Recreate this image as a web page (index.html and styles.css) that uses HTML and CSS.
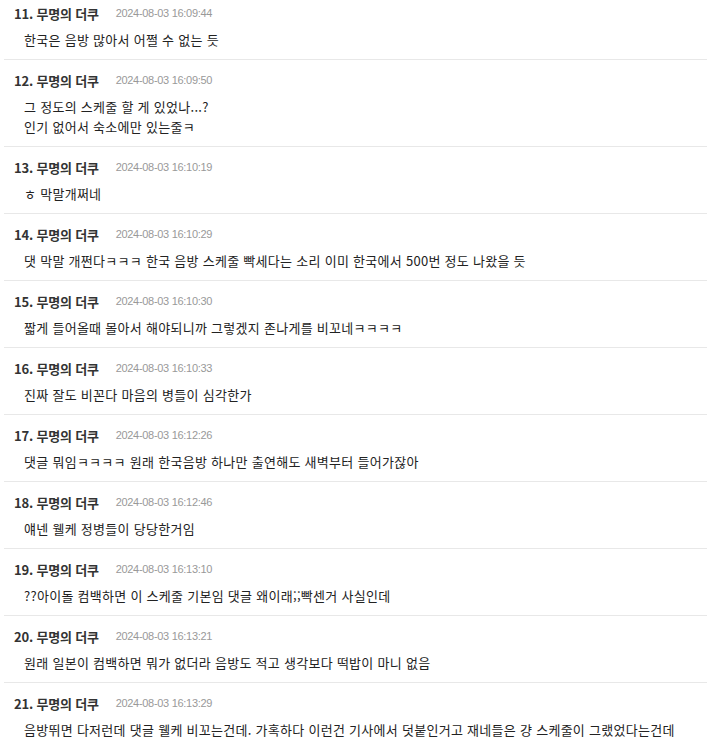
FILE: index.html
```html
<!DOCTYPE html>
<html lang="ko">
<head>
<meta charset="utf-8">
<link rel="stylesheet" href="styles.css">
</head>
<body>
<ul class="comments">
  <li class="comment">
    <div class="meta"><span class="name">11. 무명의 더쿠</span><span class="date">2024-08-03 16:09:44</span></div>
    <div class="body">한국은 음방 많아서 어쩔 수 없는 듯</div>
  </li>
  <li class="comment">
    <div class="meta"><span class="name">12. 무명의 더쿠</span><span class="date">2024-08-03 16:09:50</span></div>
    <div class="body">그 정도의 스케줄 할 게 있었나...?<br>인기 없어서 숙소에만 있는줄ㅋ</div>
  </li>
  <li class="comment">
    <div class="meta"><span class="name">13. 무명의 더쿠</span><span class="date">2024-08-03 16:10:19</span></div>
    <div class="body">ㅎ 막말개쩌네</div>
  </li>
  <li class="comment">
    <div class="meta"><span class="name">14. 무명의 더쿠</span><span class="date">2024-08-03 16:10:29</span></div>
    <div class="body">댓 막말 개쩐다ㅋㅋㅋ 한국 음방 스케줄 빡세다는 소리 이미 한국에서 500번 정도 나왔을 듯</div>
  </li>
  <li class="comment">
    <div class="meta"><span class="name">15. 무명의 더쿠</span><span class="date">2024-08-03 16:10:30</span></div>
    <div class="body">짧게 들어올때 몰아서 해야되니까 그렇겠지 존나게를 비꼬네ㅋㅋㅋㅋ</div>
  </li>
  <li class="comment">
    <div class="meta"><span class="name">16. 무명의 더쿠</span><span class="date">2024-08-03 16:10:33</span></div>
    <div class="body">진짜 잘도 비꼰다 마음의 병들이 심각한가</div>
  </li>
  <li class="comment">
    <div class="meta"><span class="name">17. 무명의 더쿠</span><span class="date">2024-08-03 16:12:26</span></div>
    <div class="body">댓글 뭐임ㅋㅋㅋㅋ 원래 한국음방 하나만 출연해도 새벽부터 들어가잖아</div>
  </li>
  <li class="comment">
    <div class="meta"><span class="name">18. 무명의 더쿠</span><span class="date">2024-08-03 16:12:46</span></div>
    <div class="body">얘넨 웰케 정병들이 당당한거임</div>
  </li>
  <li class="comment">
    <div class="meta"><span class="name">19. 무명의 더쿠</span><span class="date">2024-08-03 16:13:10</span></div>
    <div class="body">??아이돌 컴백하면 이 스케줄 기본임 댓글 왜이래;;빡센거 사실인데</div>
  </li>
  <li class="comment">
    <div class="meta"><span class="name">20. 무명의 더쿠</span><span class="date">2024-08-03 16:13:21</span></div>
    <div class="body">원래 일본이 컴백하면 뭐가 없더라 음방도 적고 생각보다 떡밥이 마니 없음</div>
  </li>
  <li class="comment">
    <div class="meta"><span class="name">21. 무명의 더쿠</span><span class="date">2024-08-03 16:13:29</span></div>
    <div class="body">음방뛰면 다저런데 댓글 웰케 비꼬는건데. 가혹하다 이런건 기사에서 덧붙인거고 재네들은 걍 스케줄이 그랬었다는건데</div>
  </li>
</ul>
</body>
</html>
```

FILE: styles.css
```css
html, body {
  margin: 0;
  padding: 0;
  background: #fff;
}

body {
  font-family: "Noto Sans CJK KR", "Noto Sans", sans-serif;
  color: #333;
  overflow: hidden;
}

.comments {
  list-style: none;
  margin: 0 0 0 4px;
  padding: 0;
}

.comment {
  padding: 10px 0 9px 10px;
  border-bottom: 1px solid #e8e8e8;
}

.comment:first-child {
  padding-top: 3px;
}

.meta {
  display: flex;
  align-items: center;
  gap: 17px;
  height: 20px;
}

.name {
  font-size: 13px;
  font-weight: bold;
  color: #333;
  letter-spacing: -0.2px;
}

.date {
  font-family: "Liberation Sans", Arial, sans-serif;
  font-size: 11px;
  letter-spacing: -0.3px;
  color: #999;
}

.body {
  margin-top: 7px;
  padding-left: 10px;
  font-size: 13px;
  line-height: 20px;
  letter-spacing: 0.28px;
  color: #222;
  white-space: nowrap;
}
```
